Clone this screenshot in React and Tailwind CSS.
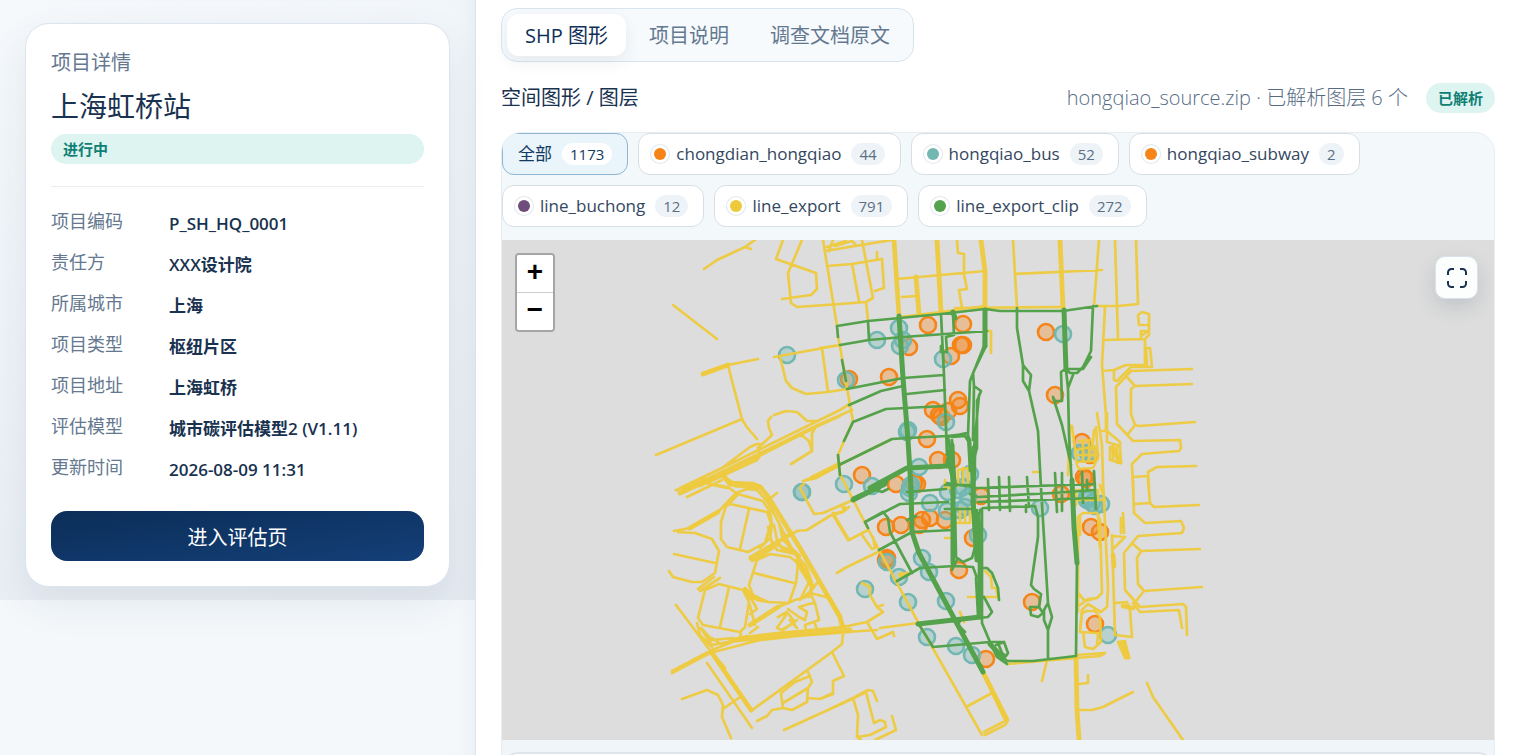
import { useState } from 'react';

const details = [
  { label: '项目编码', value: 'P_SH_HQ_0001' },
  { label: '责任方', value: 'XXX设计院' },
  { label: '所属城市', value: '上海' },
  { label: '项目类型', value: '枢纽片区' },
  { label: '项目地址', value: '上海虹桥' },
  { label: '评估模型', value: '城市碳评估模型2 (V1.11)' },
  { label: '更新时间', value: '2026-08-09 11:31' },
];

const tabs = ['SHP 图形', '项目说明', '调查文档原文'];

const layers = [
  { name: '全部', count: 1173 },
  { name: 'chongdian_hongqiao', count: 44, dot: 'bg-[#f58518]' },
  { name: 'hongqiao_bus', count: 52, dot: 'bg-[#72b7b2]' },
  { name: 'hongqiao_subway', count: 2, dot: 'bg-[#f58518]' },
  { name: 'line_buchong', count: 12, dot: 'bg-[#6f4e7c]' },
  { name: 'line_export', count: 791, dot: 'bg-[#eeca3b]' },
  { name: 'line_export_clip', count: 272, dot: 'bg-[#54a24b]' },
];

// ================= MAP DATA =================
const chargers = [
  [928, 325], [963, 324], [909, 347], [961, 345], [963, 345], [951, 356], [889, 377], [849, 379],
  [1046, 332], [1055, 395], [958, 400], [960, 406], [933, 410], [948, 411], [941, 417], [939, 415],
  [927, 439], [938, 460], [952, 460], [862, 475], [896, 484], [914, 483], [917, 484], [1082, 442],
  [1090, 455], [1084, 477], [1086, 479], [1061, 494], [981, 496], [886, 527], [901, 525], [919, 525],
  [922, 520], [930, 518], [945, 520], [973, 538], [887, 558], [959, 570], [1091, 527], [1100, 532],
  [1032, 602], [1095, 624], [986, 659], [886, 560],
];

const busStops = [
  [787, 355], [877, 340], [899, 328], [903, 340], [900, 346], [943, 359], [846, 380], [1063, 334],
  [908, 430], [907, 432], [946, 422], [919, 467], [844, 484], [802, 492], [872, 486], [910, 488],
  [909, 493], [911, 485], [930, 503], [970, 474], [948, 492], [958, 490], [963, 487], [968, 497],
  [965, 507], [947, 511], [960, 510], [978, 535], [1040, 508], [1080, 453], [1088, 453], [1087, 500],
  [1095, 506], [1101, 504], [1087, 497], [865, 589], [887, 562], [899, 577], [922, 558], [929, 572],
  [908, 602], [946, 601], [927, 637], [956, 646], [972, 655], [1108, 635], [802, 492], [1092, 503],
];

const exportLines = [
  // north west
  'M755 240L745 247L717 260L704 269M745 247L751 249',
  'M673 305L717 339',
  'M703 373L728 365L758 359M728 365L732 381L742 419L746 426L757 439M742 419L656 455',
  'M774 357L840 345M780 357L786 381L792 388L806 394L828 392L847 389M822 348L828 392',
  'M783 240L776 259L816 273L817 289L811 295L782 299',
  'M802 240L788 273L791 303L797 307L840 304L866 302L873 298L862 240',
  'M823 240L837 326M833 240L829 251M825 251L892 240M835 246L852 241L855 244M827 247L846 241',
  'M827 266L852 264L882 259L884 288L875 291M877 252L877 260M852 264L859 301M866 302L868 320',
  'M893 240L898 316M895 240L900 316M897 279L985 271M902 297L916 296',
  'M957 240L958 253L964 254L964 275L967 289L959 290L962 308',
  'M900 317L941 312L985 306M955 308L1063 307',
  'M987 331L991 331L991 353',
  'M820 348L840 345M838 337L840 346L847 388L853 421L844 441L838 455L840 475L843 480L878 548L918 622L982 735',
  'M1013 240L1017 308M1015 274L1102 270M1099 240L1094 305M1115 240L1118 338M1136 240L1138 304L1118 306L1097 306',
  'M774 415L786 411L797 412L807 421L817 421M771 417L768 421L769 428L772 435L758 448L760 456L757 460L707 483',
  'M680 488L722 468L840 410L848 405M684 490L820 424L852 410M700 486L818 426L840 416M722 468L750 447L757 444L763 444',
  'M817 425L812 433L812 451L791 464M797 436L803 436L809 441L812 451M803 481L816 478L839 465L892 439',
  'M722 474L730 482L753 483L762 487M708 484L727 488M676 490L713 478L730 470',
  // interchange, south west
  'M677 490L705 478M687 497L722 480M710 484L728 487L736 493L718 512L690 528L674 531',
  'M730 504L767 512L771 523L765 543L748 552L727 547L721 539L721 522L726 506L730 504M749 509L740 549',
  'M730 503L738 494L763 501L770 512L772 524L770 538L760 548M736 493L747 489L757 490L767 501L777 493',
  'M678 532L695 533L712 539L719 551L715 573L702 582L692 582L673 577L669 571M674 554L715 563',
  'M698 589L714 577M700 591L720 578',
  'M705 590L719 584L743 590L749 602L745 627L740 632L703 625L698 618L705 590M729 587L720 627',
  'M757 560L770 554L790 557L798 563L796 583L789 603L768 602L753 595L749 585L757 560M754 573L794 583',
  'M750 559L797 531L807 530L833 514L844 511L842 506M750 557L790 534M752 561L775 547',
  'M800 488L814 514L823 513L853 500M801 486L804 484M805 480L812 478M833 513L849 540L868 530M849 507L843 512L833 515',
  'M767 501L779 523L790 545L812 583M774 525L777 540L783 550L797 555M779 523L783 540L800 556M770 538L777 550L795 554L806 566L812 583L809 597',
  'M768 527L772 543L790 550M782 530L791 552M798 563L810 580L800 600L812 590L817 583M798 565L808 570',
  'M676 605L712 653L751 711L832 652L842 644L843 633M712 653L725 668M697 623L700 635L712 647M702 630L712 645L738 640L741 634',
  'M712 638L722 645L730 641L747 636M701 628L712 640L733 638',
  'M672 673L710 653L760 640L797 636L850 632M672 671L712 650L745 637L777 633L843 627',
  'M707 663L752 728M682 699L707 690L718 695L723 705L722 717L731 738M723 709L740 697',
  'M757 721L767 716L772 710L783 708L792 710L807 702L808 688L812 682L808 672M783 708L781 693L795 682L810 676M783 703L808 688M808 698L820 699L833 693L833 681L844 676L832 652',
  'M784 730L850 700L866 692',
  'M743 590L752 600L757 609L750 614M745 588L757 600L768 602M749 602L755 625M750 633L758 627M778 607L795 600L806 597L812 590',
  'M778 617L787 612L795 622L782 630L777 628L786 615M783 630L797 620M788 609L799 617L805 620L807 612L799 607L809 604L815 603L819 620L805 625L806 631L817 630L815 624M810 593L826 597M815 603L810 593M790 620L797 628',
  // south
  'M830 510L853 500M845 507L843 512L833 515M848 540L833 515M862 535L872 549L875 548L873 537',
  'M878 552L845 568L837 573M862 583L870 587L870 595L877 607L883 605M877 607L883 612L867 622L843 627L830 628M867 622L877 639L893 632L894 636',
  'M830 633L877 630M880 628L918 623M830 598L840 615L842 627M826 594L841 620L845 628',
  'M844 676L833 681L833 694L820 699M830 709L853 698L868 690L873 691L877 701M853 698L858 715L857 737L870 735L886 727L885 722L880 720L874 723L866 692M892 716L896 730L875 740M857 737L861 740',
  'M982 672L1008 720L1005 725L985 735M986 680L1006 722M984 732L1003 722M966 707L992 693M960 612L964 622',
  'M968 597L998 597L996 588L992 588L991 577L985 571',
  // station core
  'M958 470L958 486M963 468L963 486M968 470L968 485M945 480L945 488L952 488M958 470L968 468M960 508L960 521M965 508L965 521M970 508L970 523L957 523M955 515L955 538M945 538L953 538',
  'M1033 472L1040 472M1070 425L1068 475M1072 426L1077 465L1079 469L1093 468L1098 458L1096 427M1094 430L1092 450M1076 450L1097 446M1077 455L1097 455M1079 441L1090 440M1083 441L1083 462M1089 441L1089 462M1077 462L1095 461L1095 446',
  'M1076 490L1098 490L1098 500M1076 500L1102 500M1100 485L1105 500M1076 490L1076 505',
  // east side
  'M1105 307L1102 365L1106 415L1106 430M1103 340L1145 339L1145 365L1126 365L1114 370L1103 371M1114 370L1114 380L1117 381L1131 367L1152 367L1150 348L1146 348L1147 366',
  'M1145 339L1149 335L1149 314L1142 312L1138 315L1139 325L1149 325M1141 337L1141 331L1149 331M1141 336L1147 332',
  'M1192 369L1131 371L1116 387L1117 424L1133 441L1180 440L1181 448L1179 451L1142 454L1132 464L1133 488',
  'M1126 376L1135 386L1192 384M1135 386L1131 389L1131 414L1135 425L1128 434M1135 425L1139 426L1195 422',
  'M1196 466L1157 467L1148 472L1149 488M1133 477L1148 476',
  'M1097 413L1102 445L1103 480L1108 588L1107 607L1101 612L1088 604L1082 610L1080 630M1102 431L1107 431L1120 442L1120 446L1107 442L1107 413M1110 447L1110 460L1121 463L1120 446M1113 446L1113 461M1117 446L1117 463',
  'M1133 480L1134 513L1145 523L1181 521L1184 528L1182 533L1138 536L1124 553L1125 590L1140 607L1183 604L1186 607L1187 635',
  'M1148 480L1150 503L1154 507L1199 505M1134 504L1150 503',
  'M1200 549L1141 551L1133 544M1141 551L1137 558L1138 584L1144 591L1202 587M1144 591L1136 601M1133 603L1140 612L1179 610L1182 628',
  'M1078 593L1078 517L1083 513L1097 513L1100 520L1102 593L1097 598L1085 601L1078 593M1080 535L1080 516M1098 516L1100 548',
  'M1112 535L1115 635L1132 637L1130 610L1127 602L1115 603M1123 513L1124 533M1121 518L1121 533M1112 536L1125 537L1113 549',
  'M1082 613L1087 611L1095 611L1100 617L1101 642L1093 649L1085 647L1083 632M1082 613L1080 632L1098 633L1097 646M1078 593L1078 612M1080 605L1088 599L1097 598',
  'M1118 642L1125 658M1125 641L1129 658L1125 658M1118 642L1125 641M1121 642L1127 658',
  'M1076 655L1105 653L1100 656L1007 664M1078 684L1088 683L1088 675M1078 710L1092 710L1103 707L1133 692',
  'M1147 683L1153 697L1183 740M1047 660L1042 681',
];

const exportWide = [
  'M703 374L728 365M916 277L919 314M937 240L941 312M981 240L985 271L985 308M1060 240L1063 308',
  'M680 493L713 478M727 480L735 485L760 487L767 495L800 548L840 617L843 630M718 512L690 528',
  'M750 625L778 607M745 590L753 598M735 640L760 638L797 634L850 630M712 653L751 710',
  'M722 474L730 484L745 485M812 478L840 464',
  'M983 672L1006 718M1076 657L1077 710L1079 740M1113 555L1114 566M1123 606L1133 608M900 575L908 574',
  'M1113 448L1120 462M1123 643L1128 657M797 561L812 586',
];

const clipLines = [
  'M837 326L868 321L900 318L941 314L985 309L1000 311L1063 311L1097 306',
  'M837 326L838 337M842 360L846 381M868 321L869 340M840 345L869 340L903 337L987 331M853 422L844 441M838 455L840 475',
  'M847 389L903 378L944 375M907 394L945 390M849 405L881 391L903 386M853 422L886 409L945 406M839 465L892 439L908 438L947 436L965 434',
  'M941 314L944 375L947 455M903 378L907 440M953 313L954 335L946 337L947 352L941 352L941 346',
  'M985 310L984 346L970 381L968 435L970 471M986 346L973 373L974 386L981 391L977 401L977 448L973 461L972 488M974 386L973 440M979 395L972 470',
  'M947 437L967 433L970 440L972 480M947 437L949 440L952 480M952 437L965 436L970 444M952 440L955 480',
  'M1017 308L1017 328L1023 365L1031 375L1029 391L1038 431L1041 488L1048 603L1052 617L1048 630L1048 658M1023 365L1023 381L1029 391M1048 603L1044 610L1044 620L1048 630',
  'M1093 306L1091 351L1083 367L1077 373L1070 373L1066 369L1083 369L1091 357M1073 375L1068 388L1069 435L1072 488M1066 370L1068 388',
  'M1064 370L1061 372L1062 401L1055 401L1053 397L1062 425L1071 465',
  'M973 488L1095 484M970 494L978 497L1053 493L1095 490M978 502L1095 498M980 510L983 508L1035 506L1038 517L1038 537L1031 585L1034 589L1041 594L1039 607L1030 607L1031 615L1038 617L1043 613L1039 607',
  'M988 479L989 510M999 477L1000 510M1009 477L1010 511M1027 477L1029 507M1026 505L1026 512M1055 473L1057 512M1062 473L1062 511M1082 472L1083 503M1094 471L1096 509M1087 480L1087 490',
  'M945 485L972 485M945 509L970 509M947 483L972 487M853 498L887 482M865 522L900 504L948 502M865 522L868 528M865 522L883 512L888 518L890 532L912 573M853 500L873 489L882 492L888 489',
  'M879 550L912 532L953 530M897 581L920 568L955 566L973 567L977 578M933 647L990 642L1004 642M918 623L933 647M907 520L916 516',
  'M980 512L979 514L982 620M977 510L979 563L979 618M982 509L982 563L982 623L990 642L997 657L1007 664M980 568L987 568L992 573L998 588L999 600M984 597L992 612L988 617L980 618M976 578L978 615',
  'M998 643L1002 653L1006 656L1008 653L1004 642L996 645M955 510L956 557L963 562L972 558L975 547L974 500M952 570L957 560M1077 563L1076 656L1033 661L1007 661L992 646',
  'M907 492L946 489M960 621L958 625L965 632',
];

const clipWide = [
  'M899 316L903 378L908 440L911 488L912 532L919 553L983 672',
  'M870 488L907 468L947 466M853 500L885 484M918 624L980 617',
  'M1064 310L1066 370M947 466L952 445L953 480L953 563M974 448L973 500L977 560M1072 480L1074 527L1077 563M985 310L985 346M990 644L1003 658M950 465L955 485M953 312L955 318',
];

function ShapeMap() {
  return (
    <svg
      className="block h-full w-full"
      viewBox="502 240 992 500"
      preserveAspectRatio="xMidYMid slice"
      fill="none"
      strokeLinecap="round"
      strokeLinejoin="round"
    >
      <g stroke="#f58518" strokeWidth="2.6" fill="#f58518" fillOpacity="0.35">
        {chargers.map(([x, y], i) => (
          <circle key={i} cx={x} cy={y} r="8" />
        ))}
      </g>
      <g stroke="#72b7b2" strokeWidth="2.6" fill="#72b7b2" fillOpacity="0.35">
        {busStops.map(([x, y], i) => (
          <circle key={i} cx={x} cy={y} r="8" />
        ))}
      </g>
      <g stroke="#eeca3b" strokeWidth="2.7" strokeOpacity="0.94">
        <path d={exportLines.join('')} />
        <path d={exportWide.join('')} strokeWidth="4.8" />
      </g>
      <g stroke="#54a24b" strokeWidth="2.7">
        <path d={clipLines.join('')} />
        <path d={clipWide.join('')} strokeWidth="5" />
      </g>
    </svg>
  );
}

export default function App() {
  const [tab, setTab] = useState('SHP 图形');
  const [layer, setLayer] = useState('全部');

  return (
    <div className="flex h-screen overflow-hidden bg-white font-['Open_Sans','Noto_Sans_CJK_SC',sans-serif] text-[#18324f]">

      {/* ================= PROJECT CARD ================= */}
      <aside className="w-[476px] shrink-0 border-r border-[#dae4ec] bg-[#f4f8fb] bg-[linear-gradient(160deg,#f5f9fc,#e6ebf2)] bg-[length:100%_600px] bg-no-repeat px-[25px] pt-[23px] shadow-[inset_-16px_0_20px_-14px_rgba(24,50,79,0.06)]">
        <section className="rounded-[24px] border border-[#dce5ed] bg-white p-[25px] shadow-[0_16px_40px_rgba(24,50,79,0.08)]">
          <p className="text-[20px] leading-7 text-[#64788f]">项目详情</p>
          <h1 className="mt-2 text-[28px] leading-[42px] font-normal">上海虹桥站</h1>
          <p className="mt-[7px] rounded-full bg-[#def4f1] px-3 text-[15px] leading-[30px] font-bold text-[#0f8074]">进行中</p>

          <dl className="mt-[22px] flex flex-col gap-3 border-t border-[#e8edf2] pt-[22px]">
            {details.map((d) => (
              <div key={d.label} className="grid grid-cols-[102px_1fr] gap-4">
                <dt className="text-[18px] leading-6 text-[#64788f]">{d.label}</dt>
                <dd className="text-[17px] leading-[29px] font-semibold">{d.value}</dd>
              </div>
            ))}
          </dl>

          <button className="mt-[27px] h-[50px] w-full rounded-[16px] bg-linear-to-br from-[#0c2e58] to-[#133f78] pt-1 text-[20px] text-white">
            进入评估页
          </button>
        </section>
      </aside>

      <main className="min-w-0 flex-1 pt-2 pr-5 pl-[25px]">
        {/* ================= TABS ================= */}
        <div className="inline-flex gap-[5px] rounded-[16px] border border-[#d9e5ee] bg-[#f6fafd] p-[5px]">
          {tabs.map((t) => (
            <button
              key={t}
              onClick={() => setTab(t)}
              className={`h-[42px] rounded-[12px] px-[18px] pt-[2px] text-[20px] ${
                t === tab
                  ? 'bg-white text-[#0f2f57] shadow-[0_6px_16px_rgba(24,50,79,0.08)]'
                  : 'text-[#64788f]'
              }`}
            >
              {t}
            </button>
          ))}
        </div>

        <div className="mt-5 flex items-center justify-between">
          <h2 className="text-[20px] leading-8 font-normal">空间图形 / 图层</h2>
          <div className="flex items-center gap-[18px]">
            <span className="text-[20px] leading-8 font-light text-[#576c84]">
              hongqiao_source.zip · 已解析图层 6 个
            </span>
            <span className="rounded-full bg-[#def4f1] px-3 text-[15px] leading-[30px] font-bold text-[#0f8074]">已解析</span>
          </div>
        </div>

        {/* ================= LAYERS + MAP ================= */}
        <section className="mt-[18px] overflow-hidden rounded-[20px] border border-[#e6eef4] bg-[#f3f8fb]">
          <div className="flex flex-wrap gap-[10px] pb-[13px]">
            {layers.map((l) => (
              <button
                key={l.name}
                onClick={() => setLayer(l.name)}
                className={`flex h-[42px] items-center gap-[10px] rounded-[12px] border px-[15px] text-[17px] ${
                  l.name === layer
                    ? 'border-[#8fb6d3] bg-[#e9f4fb] text-[#123a63]'
                    : 'border-[#d8dee5] bg-white text-[#334760]'
                }`}
              >
                {l.dot && (
                  <span className={`size-3 rounded-full ${l.dot} shadow-[0_0_0_3px_#fff,0_0_0_4px_#e2e8ee]`} />
                )}
                {l.name}
                <span
                  className={`rounded-full px-2 text-[15px] leading-[22px] ${
                    l.name === layer ? 'bg-white' : 'bg-[#eef3f8] text-[#5b6f85]'
                  }`}
                >
                  {l.count}
                </span>
              </button>
            ))}
          </div>

          <div className="relative h-[500px] bg-[#ddd]">
            <ShapeMap />

            <div className="absolute top-[13px] left-[13px] flex flex-col overflow-hidden rounded-[4px] border-2 border-black/25 bg-clip-padding">
              <button aria-label="Zoom in" className="h-[38px] w-9 border-b border-[#ccc] bg-white font-['Liberation_Mono',monospace] text-[28px] leading-[38px] font-bold text-black">+</button>
              <button aria-label="Zoom out" className="h-[37px] w-9 bg-white font-['Liberation_Mono',monospace] text-[28px] leading-[38px] font-bold text-black">−</button>
            </div>

            <button
              aria-label="Fullscreen"
              className="absolute top-4 right-4 flex size-[43px] items-center justify-center rounded-[10px] border border-[#d9e2ec] bg-[#fcfdfd] shadow-[0_8px_20px_rgba(24,50,79,0.14)]"
            >
              <svg className="size-6" viewBox="0 0 24 24" fill="none" stroke="currentColor" strokeWidth="2">
                <path d="M3 9V6.500a3.500 3.500 0 0 1 3.500-3.500H9M15 3h2.500a3.500 3.500 0 0 1 3.500 3.500V9M21 15v2.500a3.500 3.500 0 0 1-3.500 3.500H15M9 21H6.500a3.500 3.500 0 0 1-3.500-3.500V15" />
              </svg>
            </button>
          </div>

          <div className="bg-[#eff5f9] pt-3">
            <div className="h-24 rounded-[16px] border-2 border-[#dfe5ea] bg-white" />
          </div>
        </section>
      </main>
    </div>
  );
}
